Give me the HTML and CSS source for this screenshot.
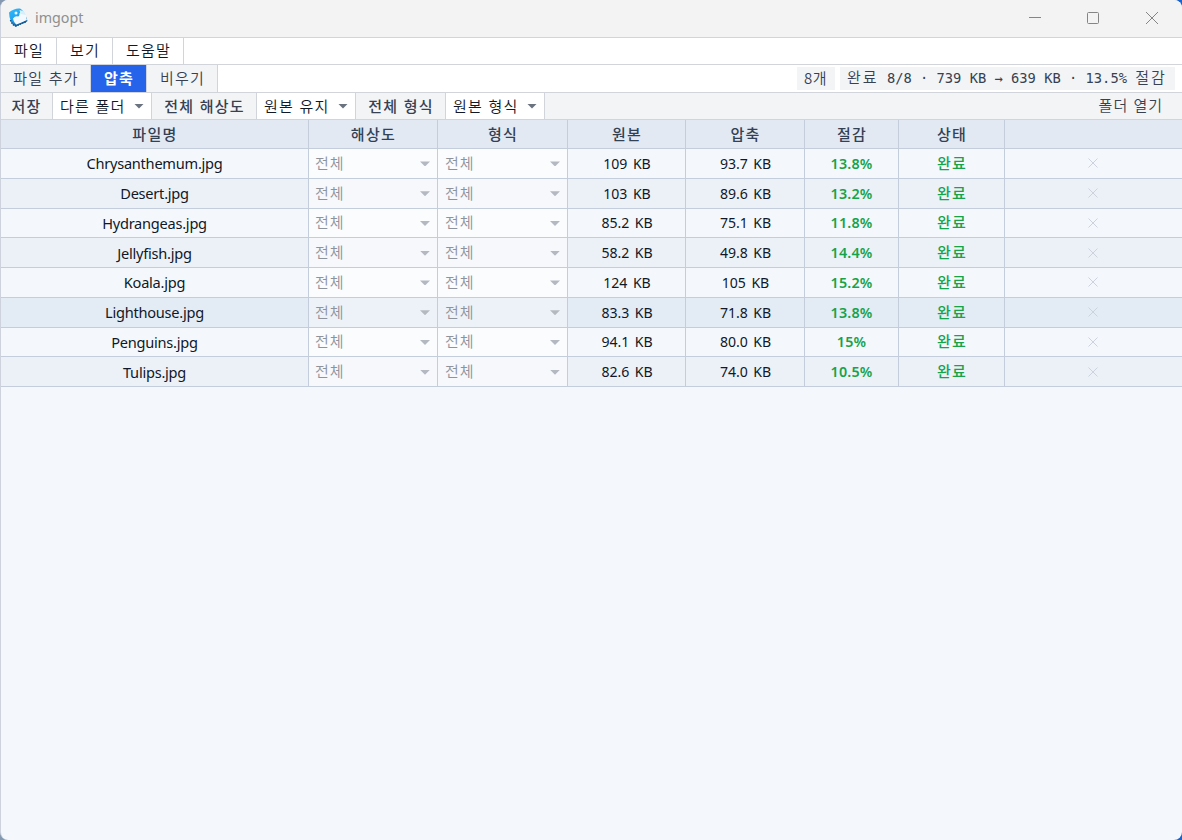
FILE: index.html
```html
<!DOCTYPE html>
<html lang="ko">
<head>
    <meta charset="UTF-8">
    <meta name="viewport" content="width=device-width, initial-scale=1.0">
    <title>imgopt</title>
    <link rel="stylesheet" href="styles.css">
</head>
<body>
    <div class="window">
        <div class="titlebar">
            <svg class="logo" width="20" height="20" viewBox="0 0 20 20">
                <defs>
                    <linearGradient id="blue" x1="0" y1="0" x2="0.6" y2="1">
                        <stop offset="0" stop-color="#35bdfa"/>
                        <stop offset="0.6" stop-color="#1fa0ee"/>
                        <stop offset="1" stop-color="#0d4f8c"/>
                    </linearGradient>
                </defs>
                <path d="M1 4.500Q3 2.500 6 1.500Q9 0 12 .5Q14 1.500 15 3L17.500 7L19.500 13Q18 14.500 14.500 15.500L8 18.500Q4.500 17.500 3 13.500Q1 9 1 4.500Z" fill="url(#blue)"/>
                <path d="M5 10.500Q7.500 7.500 10 8.500Q11.500 8.500 11.500 5.500L13 3L18 6.500Q18 10.500 19 12L13.500 14.500L8.500 16.500Q6 15 5 10.500Z" fill="#f3faff"/>
                <path d="M11.500 2L15.500 3L18 7L12.500 6Z" fill="#d5effb"/>
                <circle cx="8" cy="5" r="1.500" fill="#eefaff"/>
                <path d="M2.500 12Q4 17 8 18L18.500 13.500" fill="none" stroke="#12588f" stroke-width="1.500" stroke-dasharray="1.500 1"/>
            </svg>
            <span class="app-name">imgopt</span>
            <div class="controls">
                <svg width="12" height="12" viewBox="0 0 12 12"><path d="M0 5.500H12"/></svg>
                <svg width="12" height="12" viewBox="0 0 12 12"><rect x=".5" y=".5" width="11" height="11" rx="1"/></svg>
                <svg class="close" width="12" height="12" viewBox="0 0 12 12"><path d="M0 0L12 12M12 0L0 12"/></svg>
            </div>
        </div>

        <div class="menubar">
            <a class="menu-file">파일</a>
            <a class="menu-view">보기</a>
            <a class="menu-help">도움말</a>
        </div>

        <div class="toolbar">
            <button class="btn btn-add">파일 추가</button>
            <button class="btn btn-run">압축</button>
            <button class="btn btn-clear">비우기</button>
            <div class="status">
                <span class="count">8개</span>
                <span class="summary"><span>완료</span> 8/8 · 739 KB → 639 KB · 13.5% <span>절감</span></span>
            </div>
        </div>

        <div class="options">
            <label class="opt-save">저장</label>
            <div class="select">다른 폴더<i class="arrow"></i></div>
            <label class="opt-size">전체 해상도</label>
            <div class="select">원본 유지<i class="arrow"></i></div>
            <label class="opt-format">전체 형식</label>
            <div class="select">원본 형식<i class="arrow"></i></div>
            <a class="open-folder">폴더 열기</a>
        </div>

        <div class="table">
            <div class="row head">
                <div>파일명</div>
                <div>해상도</div>
                <div>형식</div>
                <div>원본</div>
                <div>압축</div>
                <div>절감</div>
                <div>상태</div>
                <div></div>
            </div>
            <div id="files"></div>
        </div>
    </div>

    <script>
        const files = [
            ["Chrysanthemum.jpg", "109 KB", "93.7 KB", "13.8%"],
            ["Desert.jpg", "103 KB", "89.6 KB", "13.2%"],
            ["Hydrangeas.jpg", "85.2 KB", "75.1 KB", "11.8%"],
            ["Jellyfish.jpg", "58.2 KB", "49.8 KB", "14.4%"],
            ["Koala.jpg", "124 KB", "105 KB", "15.2%"],
            ["Lighthouse.jpg", "83.3 KB", "71.8 KB", "13.8%", "hover"],
            ["Penguins.jpg", "94.1 KB", "80.0 KB", "15%"],
            ["Tulips.jpg", "82.6 KB", "74.0 KB", "10.5%"]
        ];

        document.getElementById("files").innerHTML = files
            .map(([name, before, after, saved, state]) => `
            <div class="row ${state || ""}">
                <div class="name">${name}</div>
                <div class="pick">전체<i class="arrow"></i></div>
                <div class="pick">전체<i class="arrow"></i></div>
                <div class="size">${before}</div>
                <div class="size">${after}</div>
                <div class="saved">${saved}</div>
                <div class="done">완료</div>
                <div class="remove"><svg width="10" height="10" viewBox="0 0 10 10"><path d="M.5 .5L9.500 9.500M9.500 .5L.5 9.500"/></svg></div>
            </div>`)
            .join("");
    </script>
</body>
</html>
```
FILE: styles.css
```css
* {
    box-sizing: border-box;
}
body {
    margin: 0;
    height: 840px;
    overflow: hidden;
    background: linear-gradient(90deg, #8499b0 50%, #1c62c8 50%);
    font-family: "Noto Sans", "Noto Sans CJK KR", sans-serif;
    font-size: 15px;
    line-height: 20px;
    color: #111827;
}
.window {
    height: 840px;
    background: #f4f8fd;
    border-left: 1px solid #cdd2dc;
    border-radius: 8px;
    overflow: hidden;
}
.titlebar {
    display: flex;
    align-items: center;
    height: 38px;
    padding: 0 0 2px 7px;
    background: #f3f3f3;
    border-bottom: 1px solid #d1d5db;
}
.app-name {
    margin: 1px 0 0 7px;
    font-size: 14.3px;
    color: #8f8f8f;
}
.controls {
    display: flex;
    gap: 46px;
    margin-left: auto;
    padding-right: 24px;
}
.controls svg {
    fill: none;
    stroke: #858585;
}
.controls .close {
    margin-left: 1px;
}

/* menu and toolbars */
.menubar, .toolbar, .options {
    display: flex;
    background: #fff;
    border-bottom: 1px solid #d1d5db;
    font-family: "Noto Sans CJK KR", sans-serif;
    font-weight: 350;
    letter-spacing: 1.2px;
}
.menubar {
    height: 27px;
}
.menubar a {
    display: flex;
    align-items: center;
    justify-content: center;
    padding: 0 0 2px 1px;
    border-right: 1px solid #d1d5db;
}
.menu-file, .menu-view {
    width: 56px;
}
.menu-help {
    width: 71px;
}
.toolbar {
    height: 28px;
}
.btn {
    border: 0;
    border-right: 1px solid #d1d5db;
    padding: 0 0 2px 1px;
    background: #f3f4f6;
    color: #374151;
    font: inherit;
    letter-spacing: inherit;
}
.btn-add {
    width: 90px;
}
.btn-run {
    width: 56px;
    background: #2563eb;
    color: #fff;
    font-weight: bold;
}
.btn-clear {
    width: 71px;
}
.status {
    display: flex;
    gap: 5px;
    margin-left: auto;
    padding: 2px 7px 2px 0;
    color: #374151;
}
.status > span {
    padding: 0 7px;
    line-height: 23px;
    background: #f3f4f6;
}
.status .count {
    width: 38px;
    line-height: 21px;
    letter-spacing: 0.5px;
}
.status .summary {
    width: 335px;
    font-family: "DejaVu Sans Mono", "Noto Sans CJK KR", monospace;
    font-size: 13.75px;
    letter-spacing: 0;
    white-space: nowrap;
}
.summary span {
    font-size: 15px;
    letter-spacing: 2px;
}
.options {
    height: 27px;
    background: #f3f4f6;
}
.options label {
    display: flex;
    align-items: center;
    justify-content: center;
    padding: 0 0 1px 1px;
    border-right: 1px solid #d1d5db;
    font-weight: 500;
    color: #374151;
}
.options .opt-save {
    width: 52px;
    padding-left: 0;
}
.opt-size {
    width: 105px;
}
.opt-format {
    width: 90px;
}
.select {
    display: flex;
    align-items: center;
    justify-content: space-between;
    width: 99px;
    padding: 0 7px 1px;
    background: #fff;
    border-right: 1px solid #d1d5db;
}
.arrow {
    width: 10px;
    height: 5px;
    margin-top: 1px;
    background: #6b7280;
    clip-path: polygon(0 0, 100% 0, 50% 100%);
}
.open-folder {
    margin: 2px 19px auto auto;
    color: #374151;
    letter-spacing: 1px;
}

/* file list */
.row {
    display: grid;
    grid-template-columns: 308px 129px 130px 118px 119px 94px 106px 1fr;
    height: 29.75px;
    background: #f4f8fd;
}
.row:nth-child(even) {
    background: #ecf1f8;
}
.row.hover {
    background: #e3ebf5;
}
.row > div {
    display: flex;
    align-items: center;
    justify-content: center;
    border-right: 1px solid #c3cddb;
    border-bottom: 1px solid #c3cddb;
}
.row > div:last-child {
    border-right: 0;
}
.row.head {
    height: 29px;
    background: #e2e9f3;
    color: #334155;
    font-family: "Noto Sans CJK KR", sans-serif;
    font-weight: 500;
    letter-spacing: 1.3px;
}
.row.head > div, .row .done {
    padding: 0 0 1px 1px;
}
.row .name {
    font-size: 14.6px;
    letter-spacing: -0.25px;
}
.row .size {
    padding: 1px 0 0 1px;
    font-size: 14.1px;
    letter-spacing: -0.05px;
    word-spacing: 2px;
}
.row .saved {
    padding-top: 1px;
    font-size: 14.3px;
    font-weight: 600;
    letter-spacing: 0.2px;
    color: #16a34a;
}
.row .done {
    font-family: "Noto Sans CJK KR", sans-serif;
    font-weight: 500;
    letter-spacing: 1.3px;
    color: #16a34a;
}
.row .pick {
    justify-content: space-between;
    padding: 0 7px 1px 6px;
    background: rgba(255, 255, 255, 0.5);
    color: #8d939d;
    font-family: "Noto Sans CJK KR", sans-serif;
    font-weight: 350;
    letter-spacing: 1px;
}
.row.hover .pick {
    background: rgba(255, 255, 255, 0.35);
}
.row .pick + .pick {
    padding-left: 7px;
}
.pick .arrow {
    margin-top: 2px;
    background: #b4b8c0;
}
.remove svg {
    margin-right: 1px;
    fill: none;
    stroke: #cdd3dc;
}
```
